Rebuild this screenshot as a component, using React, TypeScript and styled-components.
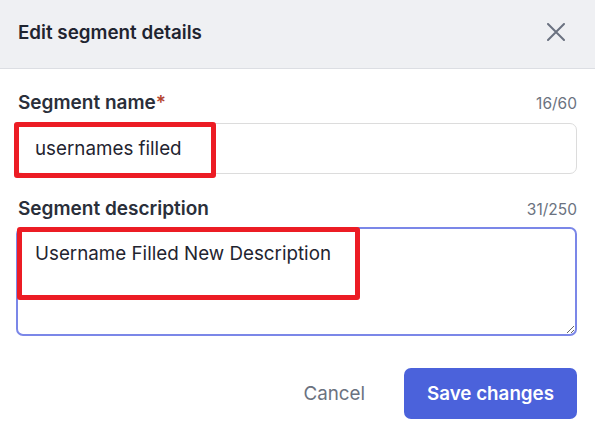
import styled, { createGlobalStyle } from "styled-components";

const GlobalStyle = createGlobalStyle`
  html, body {
    margin: 0;
    padding: 0;
    background: #ffffff;
    font-family: Inter, "Noto Sans", sans-serif;
    color: #1f2430;
  }
  * {
    box-sizing: border-box;
  }
`;

const Dialog = styled.div`
  width: 595px;
  height: 441px;
  display: flex;
  flex-direction: column;
  background: #ffffff;
`;

const Header = styled.header`
  height: 69px;
  padding: 0 30px 4px 18px;
  display: flex;
  align-items: center;
  justify-content: space-between;
  background: #eff0f3;
  border-bottom: 1px solid #dcdee3;
`;

const Title = styled.h2`
  margin: 0;
  font-size: 18.8px;
  font-weight: 600;
  color: #1f2430;
`;

const CloseButton = styled.button`
  border: none;
  background: none;
  padding: 0;
  display: flex;
  color: #6b7280;
  cursor: pointer;
`;

const Body = styled.div`
  padding: 23px 18px 0 16px;
  display: flex;
  flex-direction: column;
`;

const Field = styled.div<{ $gap?: number }>`
  display: flex;
  flex-direction: column;
  margin-bottom: ${(p) => p.$gap ?? 0}px;
`;

const LabelRow = styled.div<{ $space: number }>`
  height: 21px;
  display: flex;
  align-items: baseline;
  justify-content: space-between;
  padding-left: 2px;
  margin-bottom: ${(p) => p.$space}px;
  line-height: 21px;
`;

const Label = styled.label`
  font-size: 19px;
  font-weight: 600;
  color: #2a2f3a;
`;

const Required = styled.span`
  color: #b4452f;
`;

const Counter = styled.span`
  font-size: 15.5px;
  color: #6b7280;
`;

const Highlight = styled.div`
  position: relative;
`;

const Marker = styled.div<{ $left: number; $top: number; $w: number; $h: number }>`
  position: absolute;
  left: ${(p) => p.$left}px;
  top: ${(p) => p.$top}px;
  width: ${(p) => p.$w}px;
  height: ${(p) => p.$h}px;
  border: 5px solid #ec1c24;
  border-radius: 3px;
  pointer-events: none;
`;

const TextInput = styled.input`
  width: 100%;
  height: 51px;
  padding: 0 18px;
  border: 1px solid #dcdcdc;
  border-radius: 7px;
  font-family: inherit;
  font-size: 18.8px;
  color: #1f2430;
  outline: none;
`;

const TextArea = styled.textarea`
  display: block;
  width: 100%;
  height: 109px;
  padding: 13px 17px;
  border: 2px solid #7b87e8;
  border-radius: 7px;
  font-family: inherit;
  font-size: 18.8px;
  color: #1f2430;
  outline: none;
  resize: vertical;
`;

const Footer = styled.div`
  display: flex;
  justify-content: flex-end;
  align-items: center;
  gap: 39px;
  padding: 32px 18px 0 0;
`;

const CancelButton = styled.button`
  border: none;
  background: none;
  padding: 0;
  font-family: inherit;
  font-size: 18.8px;
  color: #6b7280;
  cursor: pointer;
`;

const SaveButton = styled.button`
  width: 173px;
  height: 51px;
  border: none;
  border-radius: 7px;
  background: #4b62db;
  color: #ffffff;
  font-family: inherit;
  font-size: 18.8px;
  font-weight: 600;
  cursor: pointer;
`;

function CloseIcon() {
  return (
    <svg width="18" height="18" viewBox="0 0 18 18" fill="none">
      <path d="M1 1 L17 17 M17 1 L1 17" stroke="currentColor" strokeWidth="2" strokeLinecap="round" />
    </svg>
  );
}

export default function App() {
  const name = "usernames filled";
  const description = "Username Filled New Description";

  return (
    <>
      <GlobalStyle />
      <Dialog>
        <Header>
          <Title>Edit segment details</Title>
          <CloseButton aria-label="Close">
            <CloseIcon />
          </CloseButton>
        </Header>
        <Body>
          <Field $gap={24}>
            <LabelRow $space={10}>
              <Label>
                Segment name<Required>*</Required>
              </Label>
              <Counter>{name.length}/60</Counter>
            </LabelRow>
            <Highlight>
              <TextInput defaultValue={name} />
              <Marker $left={-2} $top={-1} $w={202} $h={56} />
            </Highlight>
          </Field>
          <Field>
            <LabelRow $space={8}>
              <Label>Segment description</Label>
              <Counter>{description.length}/250</Counter>
            </LabelRow>
            <Highlight>
              <TextArea defaultValue={description} />
              <Marker $left={1} $top={0} $w={343} $h={73} />
            </Highlight>
          </Field>
        </Body>
        <Footer>
          <CancelButton>Cancel</CancelButton>
          <SaveButton>Save changes</SaveButton>
        </Footer>
      </Dialog>
    </>
  );
}
